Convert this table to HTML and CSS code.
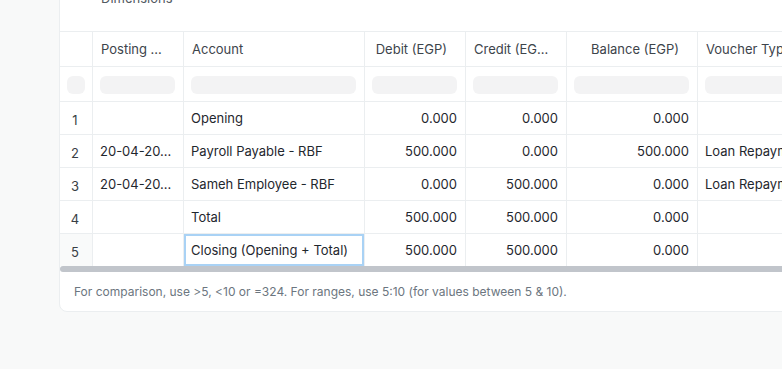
FILE: index.html
```html
<!DOCTYPE html>
<html>
<head>
<meta charset="utf-8">
<link rel="stylesheet" href="styles.css">
</head>
<body>
<div class="page">
  <div class="card">
    <div class="filters"><span class="label">Dimensions</span></div>
    <div class="grid">
      <div class="cell head idx"></div>
      <div class="cell head">Posting ...</div>
      <div class="cell head">Account</div>
      <div class="cell head num">Debit (EGP)</div>
      <div class="cell head">Credit (EG...</div>
      <div class="cell head num">Balance (EGP)</div>
      <div class="cell head">Voucher Type</div>
      <div class="cell head">Voucher No</div>

      <div class="cell filt idx"><span class="ph"></span></div>
      <div class="cell filt"><span class="ph"></span></div>
      <div class="cell filt"><span class="ph"></span></div>
      <div class="cell filt"><span class="ph"></span></div>
      <div class="cell filt"><span class="ph"></span></div>
      <div class="cell filt"><span class="ph"></span></div>
      <div class="cell filt"><span class="ph"></span></div>
      <div class="cell filt"><span class="ph"></span></div>

      <div class="cell row idx"><span class="n">1</span></div>
      <div class="cell row"></div>
      <div class="cell row">Opening</div>
      <div class="cell row num">0.000</div>
      <div class="cell row num">0.000</div>
      <div class="cell row num">0.000</div>
      <div class="cell row"></div>
      <div class="cell row"></div>

      <div class="cell row idx"><span class="n">2</span></div>
      <div class="cell row">20-04-20...</div>
      <div class="cell row">Payroll Payable - RBF</div>
      <div class="cell row num">500.000</div>
      <div class="cell row num">0.000</div>
      <div class="cell row num">500.000</div>
      <div class="cell row">Loan Repayment</div>
      <div class="cell row"></div>

      <div class="cell row idx"><span class="n">3</span></div>
      <div class="cell row">20-04-20...</div>
      <div class="cell row">Sameh Employee - RBF</div>
      <div class="cell row num">0.000</div>
      <div class="cell row num">500.000</div>
      <div class="cell row num">0.000</div>
      <div class="cell row">Loan Repayment</div>
      <div class="cell row"></div>

      <div class="cell row idx"><span class="n">4</span></div>
      <div class="cell row"></div>
      <div class="cell row">Total</div>
      <div class="cell row num">500.000</div>
      <div class="cell row num">500.000</div>
      <div class="cell row num">0.000</div>
      <div class="cell row"></div>
      <div class="cell row"></div>

      <div class="cell row last idx hover"><span class="n">5</span></div>
      <div class="cell row last"></div>
      <div class="cell row last focus">Closing (Opening + Total)</div>
      <div class="cell row last num">500.000</div>
      <div class="cell row last num">500.000</div>
      <div class="cell row last num">0.000</div>
      <div class="cell row last"></div>
      <div class="cell row last"></div>
    </div>
    <div class="scrollbar"></div>
    <div class="footer">For comparison, use &gt;5, &lt;10 or =324. For ranges, use 5:10 (for values between 5 &amp; 10).</div>
  </div>
</div>
</body>
</html>
```

FILE: styles.css
```css
html, body {
  margin: 0;
  padding: 0;
  background: #f8f9f9;
  overflow: hidden;
  font-family: Inter, "Noto Sans", sans-serif;
  -webkit-font-smoothing: antialiased;
}
.page {
  padding-left: 59px;
}
.card {
  margin-top: -20px;
  width: 1000px;
  background: #fff;
  border: 1px solid #ebeef0;
  border-radius: 8px;
  overflow: hidden;
}
.filters {
  padding: 9px 0 25px 41px;
  height: 16px;
}
.label {
  display: block;
  font-size: 13px;
  line-height: 16px;
  color: #525a62;
}
.grid {
  display: grid;
  grid-template-columns: 33px 91px 181px 101px 101px 131px 160px 160px;
  border-top: 1px solid #ebeef0;
}
.cell {
  box-sizing: border-box;
  border-right: 1px solid #ebeef0;
  border-bottom: 1px solid #ebeef0;
  display: flex;
  align-items: center;
  padding: 0 8px 0 7px;
  font-size: 13px;
  color: #1f272e;
  white-space: nowrap;
  overflow: hidden;
}
.head {
  height: 35px;
  color: #3d444b;
  padding: 0 18px 0 8px;
}
.filt {
  height: 35px;
}
.row {
  height: 33px;
}
.row.last {
  border-bottom: none;
  height: 32px;
}
.num {
  justify-content: flex-end;
}
.idx {
  justify-content: center;
  padding: 0;
  color: #383e44;
}
.idx .n {
  padding-top: 4px;
  margin-right: 2px;
}
.hover {
  background: #f9fafa;
}
.ph {
  display: block;
  flex: 1;
  height: 18px;
  border-radius: 6px;
  background: #f3f3f4;
  margin-top: 1px;
}
.filt.idx {
  padding: 0 7px;
}
.focus {
  box-shadow: inset 0 0 0 2px #a9d2f5;
}
.scrollbar {
  height: 6px;
  background: #c1c5cb;
  border-radius: 3px 0 0 3px;
}
.footer {
  padding: 12px 14px 11px;
  font-size: 12px;
  line-height: 16px;
  color: #6c7680;
}
```
